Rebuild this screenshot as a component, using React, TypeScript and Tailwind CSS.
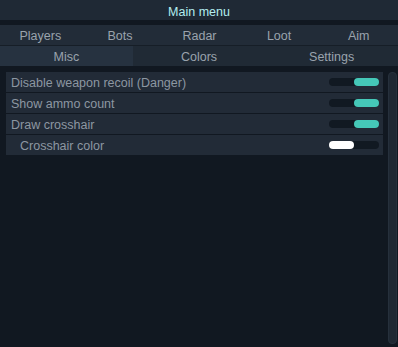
const topTabs = ['Players', 'Bots', 'Radar', 'Loot', 'Aim']
const subTabs = ['Misc', 'Colors', 'Settings']

const rows = [
  { label: 'Disable weapon recoil (Danger)', on: true, indent: false },
  { label: 'Show ammo count', on: true, indent: false },
  { label: 'Draw crosshair', on: true, indent: false },
  { label: 'Crosshair color', on: false, indent: true },
]

function Toggle({ on }: { on: boolean }) {
  return (
    <div className="w-[50px] h-[8px] rounded-full bg-[#111922] flex">
      {on ? (
        <div className="ml-auto w-[25px] h-full rounded-full bg-[#45c8b8]" />
      ) : (
        <div className="w-[25px] h-full rounded-full bg-white" />
      )}
    </div>
  )
}

export default function App() {
  return (
    <div className="w-[398px] h-[347px] bg-[#111821] flex flex-col font-['Liberation_Sans',Arial,sans-serif] text-[12.5px] leading-none overflow-hidden">
      <div className="h-[20px] bg-[#1f2935] flex items-center justify-center text-[#b3eef0] pt-[4px]">Main menu</div>
      <div className="h-[5px]" />
      <div className="h-[20px] bg-[#222c38] grid grid-cols-5 text-[#9aa3ad]">
        {topTabs.map(t => (
          <div key={t} className="flex items-center justify-center pt-[3px] pl-[1px]">{t}</div>
        ))}
      </div>
      <div className="h-[1px] bg-[#161e27]" />
      <div className="h-[20px] bg-[#202a35] grid grid-cols-3 text-[#9aa3ad]">
        {subTabs.map((t, i) => (
          <div key={t} className={`flex items-center justify-center pt-[3px] ${i === 0 ? 'bg-[#263240]' : ''}`}>{t}</div>
        ))}
      </div>
      <div className="flex-1 flex pt-[6px] pl-[6px] pr-[1px] pb-[3px] gap-[5px]">
        <div className="flex-1 flex flex-col gap-[1px] self-start">
          {rows.map(r => (
            <div key={r.label} className="h-[20px] bg-[#222b37] flex items-center justify-between pr-[4px]">
              <span className={`text-[#8d97a2] pt-[3px] ${r.indent ? 'pl-[14px]' : 'pl-[5px]'}`}>{r.label}</span>
              <Toggle on={r.on} />
            </div>
          ))}
        </div>
        <div className="w-[9px] rounded-[4px] bg-[#1f2833] border border-[#26303c]" />
      </div>
    </div>
  )
}
